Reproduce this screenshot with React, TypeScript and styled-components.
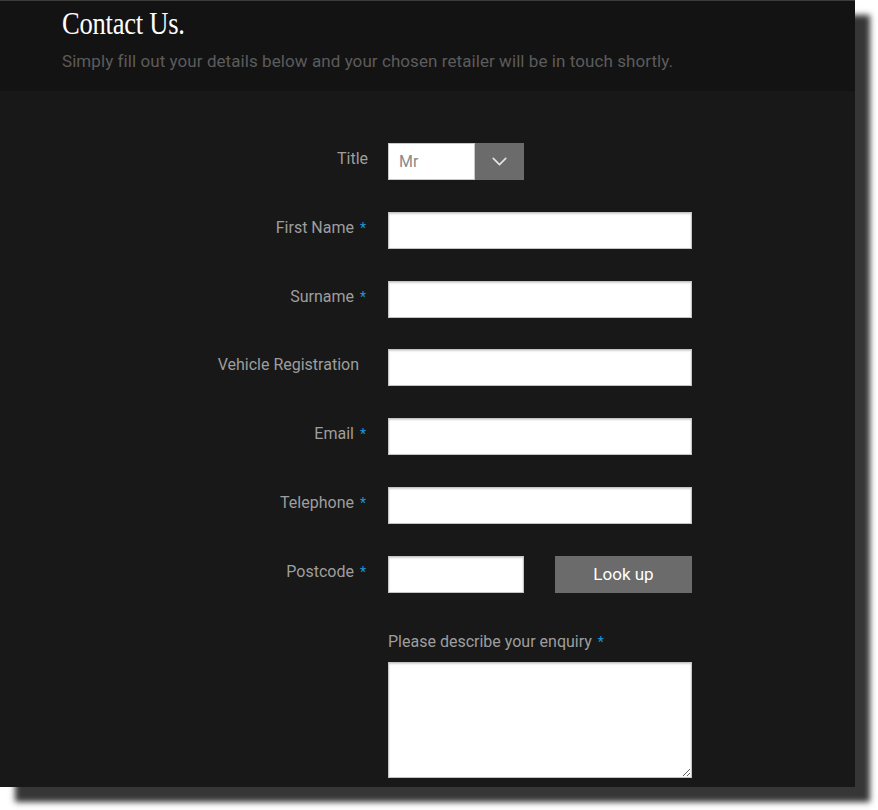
import React from "react";
import styled, { createGlobalStyle } from "styled-components";
import { ChevronDown } from "lucide-react";

const GlobalStyle = createGlobalStyle`
  html, body {
    margin: 0;
    padding: 0;
    background: #ffffff;
  }
  body {
    min-height: 810px;
    font-family: Roboto, "Liberation Sans", sans-serif;
  }
`;

const fields = [
  { label: "First Name", required: true },
  { label: "Surname", required: true },
  { label: "Vehicle Registration", required: false },
  { label: "Email", required: true },
  { label: "Telephone", required: true },
];

function App() {
  return (
    <>
      <GlobalStyle />
      <Page>
        <Panel>
          <Header>
            <Title>Contact Us.</Title>
            <Intro>
              Simply fill out your details below and your chosen retailer will
              be in touch shortly.
            </Intro>
          </Header>
          <Form>
            <Label>Title</Label>
            <Select>
              <SelectValue>Mr</SelectValue>
              <SelectButton>
                <ChevronDown size={25} strokeWidth={1.6} color="#e4e4e4" />
              </SelectButton>
            </Select>

            {fields.map((f) => (
              <React.Fragment key={f.label}>
                <Label offset={!f.required}>
                  {f.label}
                  {f.required && <Star>*</Star>}
                </Label>
                <Input type="text" />
              </React.Fragment>
            ))}

            <Label>
              Postcode<Star>*</Star>
            </Label>
            <PostcodeRow>
              <Input type="text" $short />
              <LookUp type="button">Look up</LookUp>
            </PostcodeRow>

            <span />
            <Enquiry>
              <EnquiryLabel>
                Please describe your enquiry<Star>*</Star>
              </EnquiryLabel>
              <TextArea />
            </Enquiry>
          </Form>
        </Panel>
      </Page>
    </>
  );
}

export default App;

const Page = styled.div`
  height: 810px;
`;

const Panel = styled.main`
  width: 855px;
  height: 787px;
  box-sizing: border-box;
  background: #181818;
  border-top: 1px solid #3c3c3c;
  box-shadow: 15px 15px 6px #363636;
  display: flex;
  flex-direction: column;
  overflow: hidden;
`;

const Header = styled.header`
  height: 90px;
  box-sizing: border-box;
  background: #131313;
  padding: 4px 0 0 62px;
`;

const Title = styled.h1`
  margin: 0;
  font-family: "Liberation Serif", serif;
  font-weight: normal;
  font-size: 32px;
  line-height: 36px;
  letter-spacing: -0.3px;
  color: #ffffff;
  transform: scaleX(0.83);
  transform-origin: left;
`;

const Intro = styled.p`
  margin: 10px 0 0;
  font-size: 17px;
  line-height: 20px;
  letter-spacing: 0.07px;
  color: #5c5c5c;
`;

const Form = styled.section`
  display: grid;
  grid-template-columns: 368px 304px;
  column-gap: 20px;
  row-gap: 31.8px;
  padding-top: 52px;
`;

const Label = styled.label<{ offset?: boolean }>`
  text-align: right;
  font-size: 16px;
  line-height: 18px;
  padding-top: 7px;
  padding-right: ${(p) => (p.offset ? "9px" : "0")};
  color: #9e9e9e;
`;

const Star = styled.span`
  color: #1a9ad6;
  margin-left: 6px;
  margin-right: 2px;
  font-size: 14px;
`;

const Select = styled.div`
  width: 136px;
  height: 37px;
  display: flex;
`;

const SelectValue = styled.div`
  flex: 1;
  background: #ffffff;
  border: 1px solid #c8c8c8;
  box-sizing: border-box;
  padding: 0 10px;
  display: flex;
  align-items: center;
  font-size: 16px;
  color: #8a8a8a;
`;

const SelectButton = styled.div`
  width: 49px;
  background: #6b6b6b;
  display: flex;
  align-items: center;
  justify-content: center;
`;

const Input = styled.input<{ $short?: boolean }>`
  width: ${(p) => (p.$short ? "136px" : "304px")};
  height: 37px;
  box-sizing: border-box;
  margin: 0;
  background: #ffffff;
  border: 1px solid #c4c4c4;
  box-shadow: inset 0 1px 2px rgba(0, 0, 0, 0.18);
  outline: none;
`;

const PostcodeRow = styled.div`
  display: flex;
  justify-content: space-between;
`;

const LookUp = styled.button`
  width: 137px;
  height: 37px;
  border: none;
  background: #6b6b6b;
  color: #ffffff;
  font-family: Roboto, "Liberation Sans", sans-serif;
  font-size: 17px;
  padding: 0;
`;

const Enquiry = styled.div`
  display: flex;
  flex-direction: column;
`;

const EnquiryLabel = styled.div`
  font-size: 16px;
  line-height: 18px;
  padding-top: 8px;
  margin-bottom: 11px;
  color: #9e9e9e;
`;

const TextArea = styled.textarea`
  width: 304px;
  height: 116px;
  box-sizing: border-box;
  margin: 0;
  background: #ffffff;
  border: 1px solid #c4c4c4;
  box-shadow: inset 0 1px 2px rgba(0, 0, 0, 0.18);
  outline: none;
`;
